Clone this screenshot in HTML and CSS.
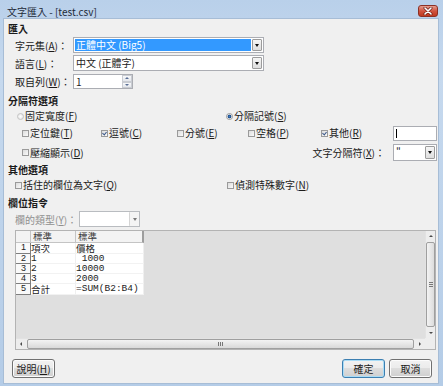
FILE: index.html
```html
<!DOCTYPE html>
<html lang="zh-Hant">
<head>
  <meta charset="UTF-8">
  <title>文字匯入</title>
  <link rel="stylesheet" href="styles.css">
</head>
<body>
  <div class="window">
    <div class="titlebar">
      <span class="title">文字匯入 - [test.csv]</span>
      <span class="close">
        <svg width="10" height="8" viewBox="0 0 10 8">
          <path d="M2 1 L8 7 M8 1 L2 7" stroke="#6b1f16" stroke-width="3" stroke-linecap="round"/>
          <path d="M2 1 L8 7 M8 1 L2 7" stroke="#fff" stroke-width="1.6" stroke-linecap="round"/>
        </svg>
      </span>
    </div>
    <div class="body">
      <!-- 匯入 -->
      <div class="heading">匯入</div>
      <div class="field">
        <span class="label">字元集(<u>A</u>)：</span>
        <div class="combo wide selected"><span class="value">正體中文 (Big5)</span><span class="drop"><i></i></span></div>
      </div>
      <div class="field f2">
        <span class="label">語言(<u>L</u>)：</span>
        <div class="combo wide"><span class="value">中文 (正體字)</span><span class="drop"><i></i></span></div>
      </div>
      <div class="field f3">
        <span class="label">取自列(<u>W</u>)：</span>
        <div class="spin"><span class="value">1</span><span class="arrows"><b class="up"></b><b class="down"></b></span></div>
      </div>

      <!-- 分隔符選項 -->
      <div class="heading h2">分隔符選項</div>
      <div class="radio-row">
        <span class="opt"><span class="rb off"></span>固定寬度(<u>F</u>)</span>
        <span class="opt"><span class="rb on"></span>分隔記號(<u>S</u>)</span>
      </div>
      <div class="opts">
        <span class="opt"><span class="cb"></span>定位鍵(<u>T</u>)</span>
        <span class="opt"><span class="cb on"></span>逗號(<u>C</u>)</span>
        <span class="opt"><span class="cb"></span>分號(<u>E</u>)</span>
        <span class="opt"><span class="cb"></span>空格(<u>P</u>)</span>
        <span class="opt"><span class="cb on"></span>其他(<u>R</u>)</span>
        <div class="textbox"><span class="caret"></span></div>
      </div>
      <div class="opts o2">
        <span class="opt"><span class="cb"></span>壓縮顯示(<u>D</u>)</span>
        <span class="sep-label">文字分隔符(<u>X</u>)：</span>
        <div class="combo small"><span class="value">"</span><span class="drop"><i></i></span></div>
      </div>

      <!-- 其他選項 -->
      <div class="heading h3">其他選項</div>
      <div class="other-row">
        <span class="opt"><span class="cb"></span>括住的欄位為文字(<u>Q</u>)</span>
        <span class="opt"><span class="cb"></span>偵測特殊數字(<u>N</u>)</span>
      </div>

      <!-- 欄位指令 -->
      <div class="heading h4">欄位指令</div>
      <div class="field f5">
        <span class="label gray">欄的類型(<u>Y</u>)：</span>
        <div class="combo type disabled"><span class="value"></span><span class="drop"><i></i></span></div>
      </div>

      <div class="sheet-box">
        <div class="sheet-area">
          <div class="sheet">
            <span class="corner"></span><span class="colh">標準</span><span class="colh last">標準</span>
            <span class="rowh">1</span><span class="cell cjk">項次</span><span class="cell cjk">價格</span>
            <span class="rowh">2</span><span class="cell">1</span><span class="cell">&nbsp;1000</span>
            <span class="rowh">3</span><span class="cell">2</span><span class="cell">10000</span>
            <span class="rowh">4</span><span class="cell">3</span><span class="cell">2000</span>
            <span class="rowh">5</span><span class="cell cjk">合計</span><span class="cell">=SUM(B2:B4)</span>
          </div>
        </div>
        <div class="vscroll">
          <span class="sbtn"><i class="t-up"></i></span>
          <span class="vthumb"><span class="grip-v"></span></span>
          <span class="sbtn"><i class="t-down"></i></span>
        </div>
        <div class="hscroll">
          <span class="sbtn"><i class="t-left"></i></span>
          <span class="hthumb"><span class="grip-h"></span></span>
          <span class="sbtn"><i class="t-right"></i></span>
        </div>
        <div class="sb-corner"></div>
      </div>

      <div class="buttons">
        <span class="btn">說明(<u>H</u>)</span>
        <span class="spacer"></span>
        <span class="btn focus">確定</span>
        <span class="btn">取消</span>
      </div>
    </div>
  </div>
</body>
</html>
```

FILE: styles.css
```css
*{
  margin: 0;
  padding: 0;
  box-sizing: border-box;
}
body{
  background: #fff;
  font-family: "Noto Sans CJK TC", "Noto Sans", sans-serif;
  font-size: 10px;
  color: #1b1b1b;
}
u{
  text-decoration: underline;
  text-underline-offset: 1px;
}
.window{
  width: 443px;
  height: 386px;
  padding: 0 5px 3px 4px;
  background: linear-gradient(#b9d0ea, #c6d9ee 20%, #b4cce7);
}
.titlebar{
  height: 19px;
  display: flex;
  justify-content: space-between;
  align-items: flex-start;
  padding: 5px 0 0 3px;
}
.title{
  line-height: 14px;
  color: #1e2a38;
}
.close{
  width: 20px;
  height: 12px;
  display: flex;
  align-items: center;
  justify-content: center;
  border: 1px solid #8c3024;
  border-radius: 3px;
  background: linear-gradient(#e59d8f, #d0533f 50%, #c0391f);
}
.body{
  height: 364px;
  background: #f0f0f0;
  padding: 3px 6px 0 4px;
  box-shadow: 0 0 0 1px #a7bdd6;
}
.heading{
  height: 14px;
  line-height: 14px;
  font-weight: bold;
}
.h2{ margin-top: 5px; }
.h3{ margin-top: 2px; }
.h4{ margin-top: 4px; }

.field{
  display: flex;
  align-items: center;
  height: 16px;
  margin: 1px 0 0 7px;
}
.f2{ margin-top: 2px; }
.f3{ margin-top: 3px; height: 15px; }
.label{
  width: 58px;
  white-space: nowrap;
}
.gray{
  width: 64px;
  color: #8f8f8f;
}

.combo{
  display: flex;
  height: 16px;
  background: #fff;
  border: 1px solid #abadb3;
}
.combo .value{
  flex: 1;
  padding-left: 2px;
  line-height: 14px;
  white-space: nowrap;
}
.combo .drop{
  width: 10px;
  margin: 1px;
  display: flex;
  align-items: center;
  justify-content: center;
  border: 1px solid #9c9c9c;
  border-radius: 1px;
  background: linear-gradient(#f5f5f5, #dedede);
}
.combo .drop i{
  width: 0;
  height: 0;
  border-left: 2.5px solid transparent;
  border-right: 2.5px solid transparent;
  border-top: 3px solid #111;
}
.wide{ width: 191px; }
.selected .value{
  margin: 1px 0 1px 1px;
  background: #3399ff;
  color: #fff;
  line-height: 12px;
  padding-left: 1px;
}
.small{
  width: 44px;
  height: 17px;
}
.type{ width: 61px; }
.disabled{ border-color: #b9bcc0; }
.disabled .drop{
  background: #f4f4f4;
  border: none;
  border-left: 1px solid #d4d4d4;
  margin: 0;
}
.disabled .drop i{ border-top-color: #7a7a7a; }

.spin{
  display: flex;
  width: 60px;
  height: 15px;
  background: #fff;
  border: 1px solid #abadb3;
}
.spin .value{
  flex: 1;
  padding-left: 2px;
  line-height: 13px;
}
.spin .arrows{
  width: 10px;
  display: flex;
  flex-direction: column;
}
.spin b{
  flex: 1;
  display: flex;
  align-items: center;
  justify-content: center;
  border: 1px solid #c9ccd2;
  background: linear-gradient(#f7f8fa, #e4e7ec);
}
.spin b::after{
  content: "";
  border-left: 2px solid transparent;
  border-right: 2px solid transparent;
}
.spin .up::after{ border-bottom: 2px solid #5a6f95; }
.spin .down::after{ border-top: 2px solid #5a6f95; }

.opt{
  display: flex;
  align-items: center;
  white-space: nowrap;
  line-height: 14px;
}
.cb{
  width: 7px;
  height: 7px;
  margin-right: 1px;
  border: 1px solid #9a9a9a;
  background: linear-gradient(135deg, #dcdcdc, #fafafa);
  position: relative;
}
.cb.on::after{
  content: "";
  position: absolute;
  left: 1px;
  top: 0;
  width: 2px;
  height: 3px;
  border-right: 1px solid #3d5a8a;
  border-bottom: 1px solid #3d5a8a;
  transform: rotate(40deg);
}
.rb{
  width: 7px;
  height: 7px;
  margin-right: 1px;
  border-radius: 50%;
  border: 1px solid #9a9a9a;
  background: radial-gradient(#fff, #e0e0e0);
}
.rb.off{ border-color: #c4c4c4; }
.rb.on{ background: radial-gradient(#3e7dc4 0, #1b4a86 1.6px, #f0f0f0 2.2px); }

.radio-row{
  display: grid;
  grid-template-columns: 209px auto;
  height: 14px;
  margin: 1px 0 0 9px;
}
.opts{
  display: grid;
  grid-template-columns: 79px 76px 71px 73px 72px 44px;
  align-items: center;
  height: 16px;
  margin: 2px 0 0 14px;
}
.o2{
  height: 17px;
  margin-top: 3px;
}
.sep-label{
  grid-column: 4 / 6;
  justify-self: end;
  padding-right: 8px;
  white-space: nowrap;
}
.textbox{
  height: 15px;
  background: #fff;
  border: 1px solid #abadb3;
  padding: 2px 0 0 2px;
}
.caret{
  display: block;
  width: 1px;
  height: 9px;
  background: #000;
}
.other-row{
  display: grid;
  grid-template-columns: 212px auto;
  height: 14px;
  margin: 1px 0 0 7px;
}
.f5{ margin-top: 1px; }

.sheet-box{
  display: grid;
  grid-template-columns: 1fr 10px;
  grid-template-rows: 1fr 11px;
  width: 421px;
  height: 120px;
  margin: 3px 0 0 7px;
  border: 1px solid #b3b3b3;
  background: #dfdfdf;
}
.sheet{
  display: grid;
  grid-template-columns: 15px 45px 68px;
  grid-template-rows: 12px 11px 10px 10px 10px 11px;
  width: 128px;
  font-family: "Liberation Mono", "Noto Sans CJK TC", monospace;
  font-size: 9.5px;
}
.sheet span{
  display: block;
  line-height: 9px;
  white-space: pre;
}
.corner, .colh{
  background: #f3f3f3;
  border-right: 1px solid #c4c4c4;
  border-bottom: 1px solid #c4c4c4;
}
.sheet .colh{
  padding-left: 2px;
  line-height: 11px;
  color: #3a3a3a;
  font-family: "Noto Sans CJK TC", sans-serif;
  font-size: 9.5px;
}
.sheet .last{
  border-right: 2px solid #9d9d9d;
}
.sheet .rowh{
  background: #f9f9f9;
  border-right: 1px solid #7e7e7e;
  border-bottom: 1px solid #7e7e7e;
  padding-right: 4px;
  text-align: right;
  font-family: "Liberation Sans", sans-serif;
  font-size: 9px;
  color: #222;
}
.cell{
  background: #fff;
  border-right: 1px solid #efefef;
  border-bottom: 1px solid #f2f2f2;
}
.sheet .cjk{
  font-family: "Noto Sans CJK TC", sans-serif;
  font-size: 9.5px;
  line-height: 10px;
}

.vscroll{
  display: flex;
  flex-direction: column;
  background: #ededed;
  border-left: 1px solid #e2e2e2;
}
.hscroll{
  display: flex;
  background: #ededed;
  border-top: 1px solid #e2e2e2;
}
.sb-corner{ background: #ededed; }
.sbtn{
  flex: 0 0 10px;
  display: flex;
  align-items: center;
  justify-content: center;
}
.sbtn i{
  width: 0;
  height: 0;
}
.t-up{ border: 2px solid transparent; border-bottom: 2px solid #4a4a4a; border-top: 0; }
.t-down{ border: 2px solid transparent; border-top: 2px solid #4a4a4a; border-bottom: 0; }
.t-left{ border: 2px solid transparent; border-right: 2px solid #4a4a4a; border-left: 0; }
.t-right{ border: 2px solid transparent; border-left: 2px solid #4a4a4a; border-right: 0; }
.vthumb{
  flex: 1;
  margin: 1px 0;
  border: 1px solid #9f9f9f;
  border-radius: 2px;
  background: linear-gradient(90deg, #f3f3f3, #dcdcdc);
  display: flex;
  align-items: center;
  justify-content: center;
}
.hthumb{
  flex: 1;
  margin: 0 1px;
  border: 1px solid #9f9f9f;
  border-radius: 2px;
  background: linear-gradient(#f3f3f3, #d9d9d9);
  display: flex;
  align-items: center;
  justify-content: center;
}
.grip-v{
  width: 4px;
  height: 5px;
  border-top: 1px solid #777;
  border-bottom: 1px solid #777;
  background: linear-gradient(transparent 1px, #777 1px, #777 2px, transparent 2px);
}
.grip-h{
  width: 5px;
  height: 4px;
  border-left: 1px solid #777;
  border-right: 1px solid #777;
  background: linear-gradient(90deg, transparent 1px, #777 1px, #777 2px, transparent 2px);
}

.buttons{
  display: flex;
  gap: 4px;
  height: 19px;
  margin: 9px 0 0 4px;
}
.spacer{ flex: 1; }
.btn{
  width: 43px;
  display: flex;
  align-items: center;
  justify-content: center;
  border: 1px solid #707070;
  border-radius: 3px;
  background: linear-gradient(#f2f2f2, #ebebeb 50%, #dddddd 50%, #cfcfcf);
  box-shadow: inset 0 0 0 1px #fcfcfc;
  white-space: nowrap;
}
.btn.focus{
  border-color: #3c7fb1;
  box-shadow: inset 0 0 0 1px #a9dcf6;
}
```
